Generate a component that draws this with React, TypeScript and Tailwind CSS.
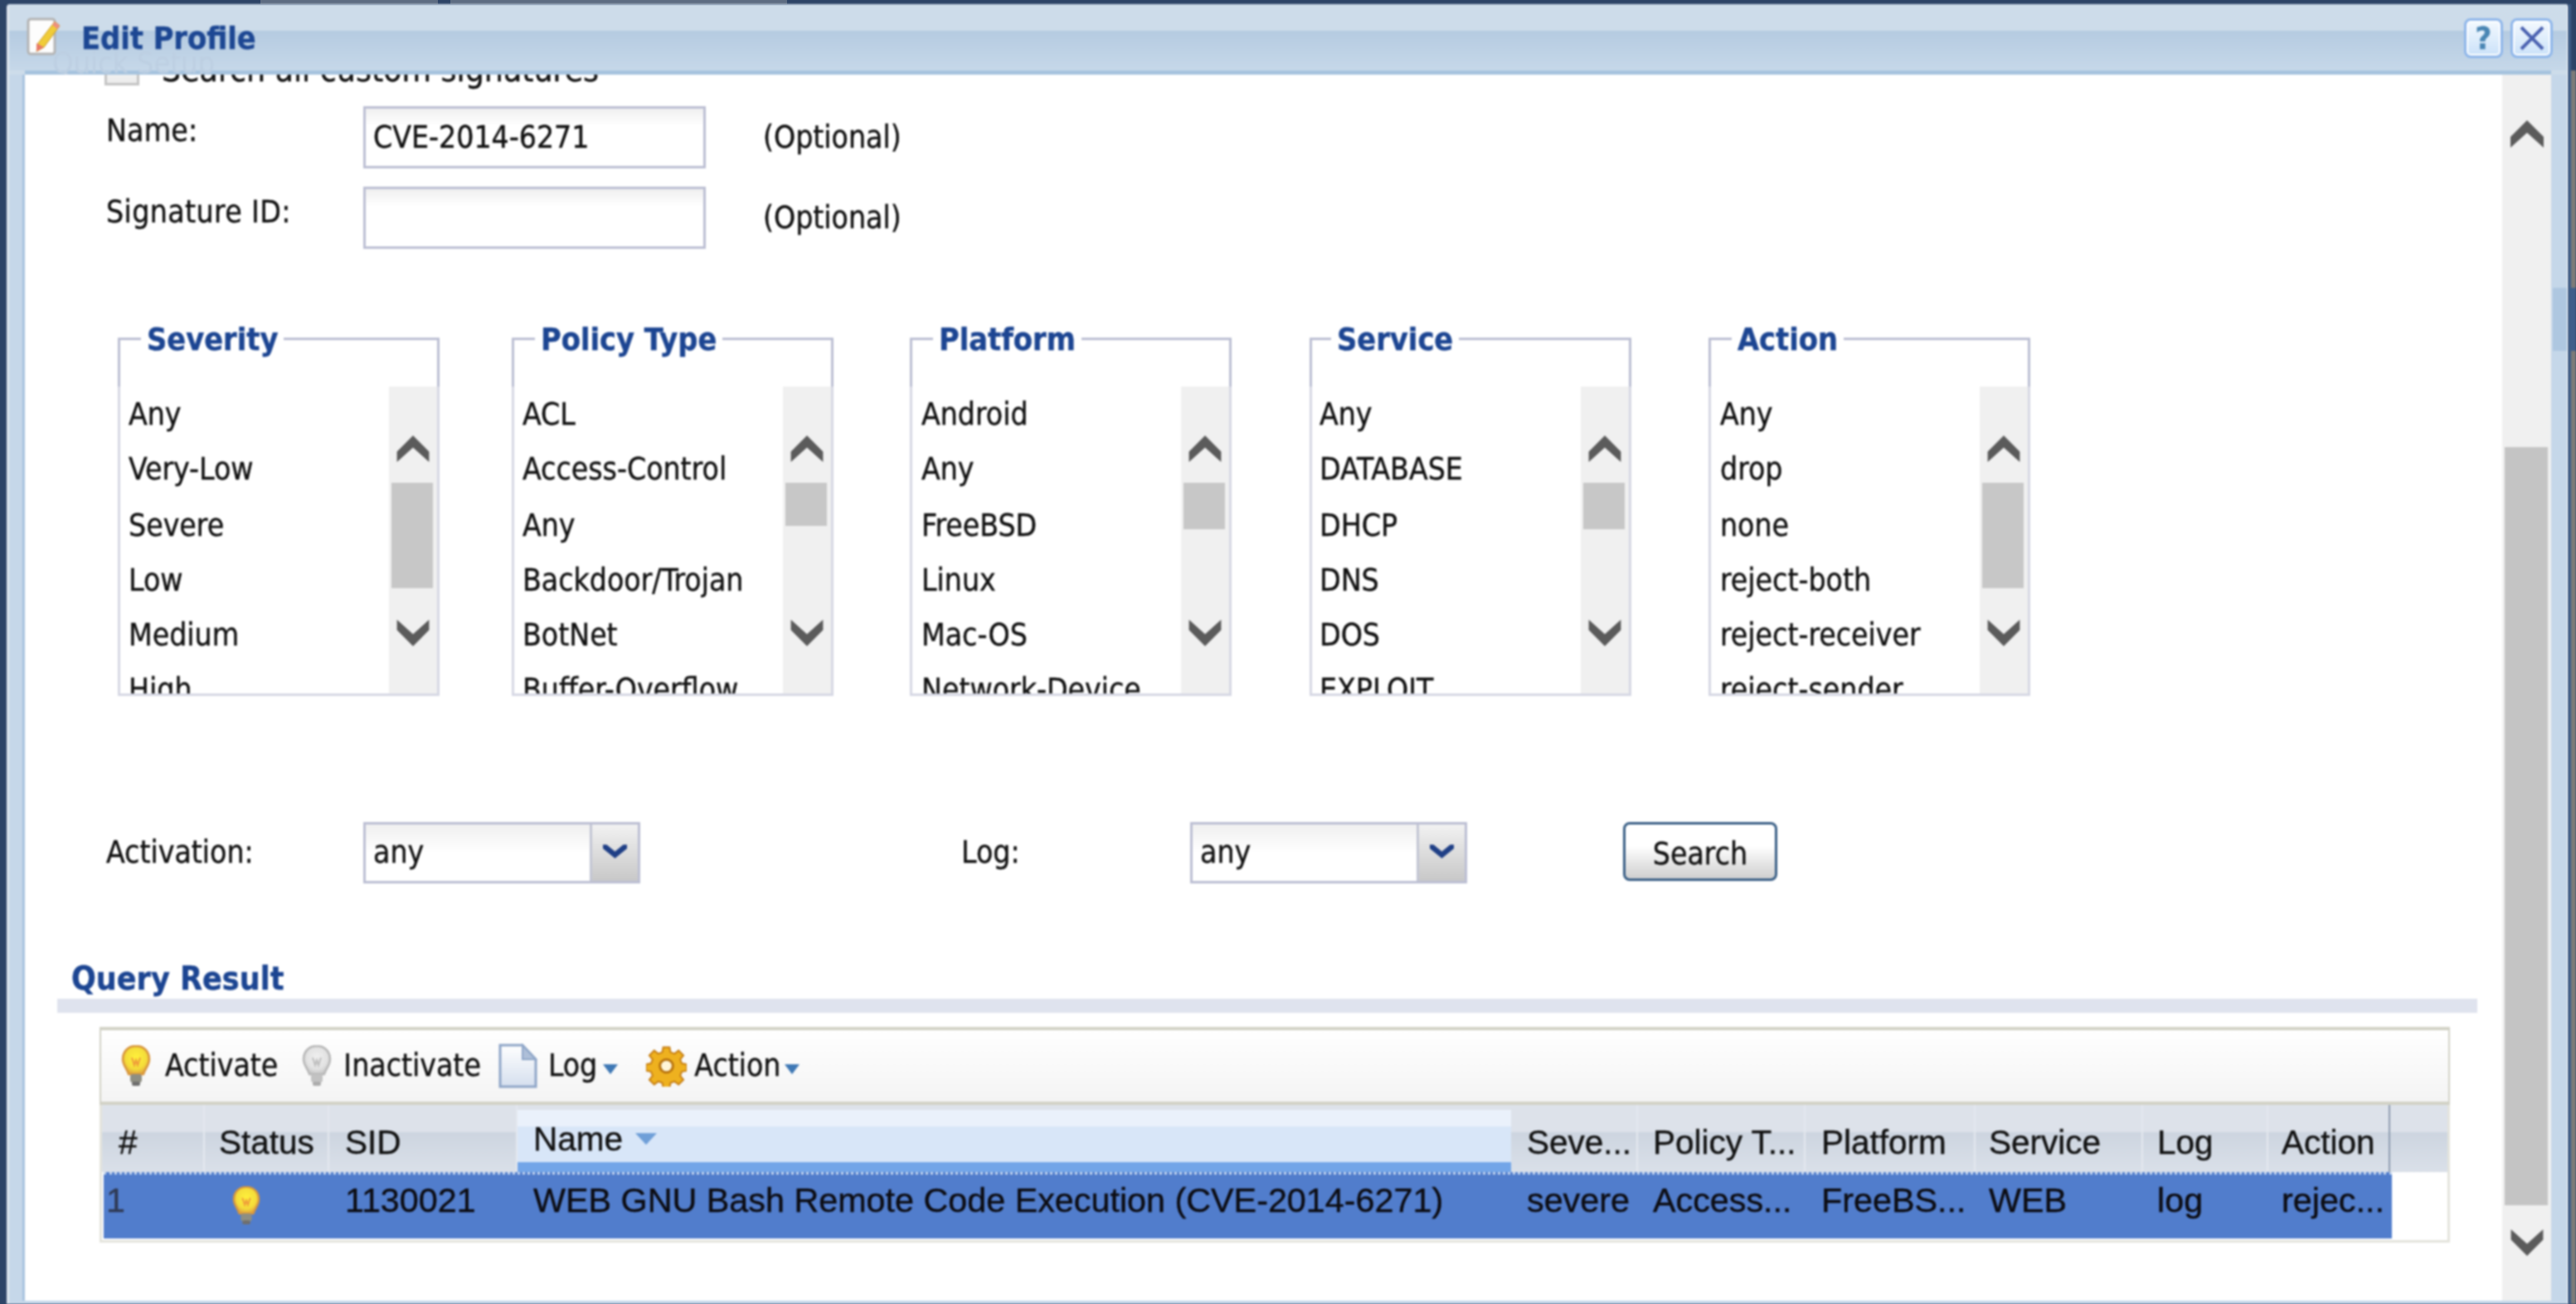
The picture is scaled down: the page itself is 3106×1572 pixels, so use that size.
import React from "react";

const Up = ({ cls }: { cls: string }) => (
  <svg viewBox="0 0 40 33" className={cls} fill="#5b5b5b"><polygon points="20,0 40,20 40,33 20,15 0,33 0,20" /></svg>
);
const Down = ({ cls }: { cls: string }) => (
  <svg viewBox="0 0 40 33" className={cls} fill="#5b5b5b"><polygon points="20,33 40,13 40,0 20,18 0,0 0,13" /></svg>
);

const Bulb = ({ on, cls, id }: { on: boolean; cls: string; id: string }) => (
  <svg viewBox="0 0 38 50" className={cls}>
    <defs>
      <radialGradient id={id} cx="0.5" cy="0.42" r="0.6">
        <stop offset="0" stopColor={on ? "#fff23a" : "#f0f0f0"} />
        <stop offset="0.65" stopColor={on ? "#f4dc3a" : "#e2e2e2"} />
        <stop offset="1" stopColor={on ? "#e0a040" : "#c4c4c4"} />
      </radialGradient>
    </defs>
    <path d="M19 1C9 1 3 8 3 17c0 7 5 11 7 18h18c2-7 7-11 7-18C35 8 29 1 19 1z" fill={`url(#${id})`} stroke={on ? "#d8963c" : "#b8b8b8"} strokeWidth="2.5" />
    <path d="M14 15l3 9 2-6 2 6 3-9" fill="none" stroke={on ? "#ee9a3a" : "#bdbdbd"} strokeWidth="2" />
    <rect x="12" y="35" width="14" height="10" rx="3" fill={on ? "#8e8e82" : "#c2c2c2"} />
    <rect x="14" y="44" width="10" height="5" rx="2" fill={on ? "#6e6e6e" : "#acacac"} />
  </svg>
);

const Gear = () => (
  <svg viewBox="0 0 50 50" className="w-[49px] h-[50px] shrink-0">
    <path d="M21 2h8l1 6 5 2 5-4 6 6-4 5 2 5 6 1v8l-6 1-2 5 4 5-6 6-5-4-5 2-1 6h-8l-1-6-5-2-5 4-6-6 4-5-2-5-6-1v-8l6-1 2-5-4-5 6-6 5 4 5-2z" fill="#eeb11f" stroke="#c77f14" strokeWidth="2" />
    <circle cx="25" cy="25" r="8" fill="#fff6d8" stroke="#b8740f" strokeWidth="3" />
  </svg>
);

const Doc = () => (
  <svg viewBox="0 0 47 54" className="w-[47px] h-[54px] shrink-0">
    <defs><linearGradient id="dg" x1="0" y1="0" x2="0" y2="1"><stop offset="0" stopColor="#ffffff" /><stop offset="1" stopColor="#d5dfee" /></linearGradient></defs>
    <path d="M2 2h27l16 17v33H2z" fill="url(#dg)" stroke="#8fa6c8" strokeWidth="3" />
    <path d="M29 2v17h16z" fill="#aebfd8" stroke="#8fa6c8" strokeWidth="2" />
  </svg>
);

const Caret = ({ cls }: { cls: string }) => (
  <svg viewBox="0 0 18 12" className={cls} fill="#3f78b5"><polygon points="0,0 18,0 9,12" /></svg>
);

const SelectChevron = () => (
  <svg viewBox="0 0 32 18" className="w-[29px] h-[17px]" fill="#1f3f86"><polygon points="16,18 32,5 32,0 27,0 16,9 5,0 0,0 0,5" /></svg>
);

const T = "font-['DejaVu_Sans_Condensed','DejaVu_Sans',sans-serif]";
const A = "font-['Liberation_Sans',Arial,sans-serif]";

const GroupBox = ({ title, items, thumb, ml, tpl, ipl }: { title: string; items: string[]; thumb: string; ml: string; tpl: string; ipl: string }) => (
  <div className={`w-[388px] h-[432px] flex flex-col border-b-[3px] border-[#d6d8e4] shrink-0 ${ml}`}>
    <div className="h-[59px] border-t-[3px] border-x-[3px] border-[#bcbfd3] relative shrink-0">
      <span className={`absolute -top-[23px] ${tpl} bg-white px-[7px] text-[#1c4592] text-[37.5px] leading-[44px] font-bold whitespace-nowrap`}>{title}</span>
    </div>
    <div className="flex flex-1 min-h-0 border-x-[3px] border-[#d6d8e4]">
      <div className={`flex-1 min-w-0 overflow-hidden ${ipl}`}>
        {items.map((s, i) => (
          <div key={s} className={`h-[66px] leading-[68px] text-[37px] whitespace-nowrap text-[#111] ${i === 2 ? "mt-[2px]" : ""}`}>{s}</div>
        ))}
      </div>
      <div className="w-[58px] bg-[#f0f0f0] flex flex-col items-center shrink-0">
        <Up cls="w-[40px] h-[32px] mt-[59px]" />
        <div className="h-[190px] pt-[25px] w-full pl-[3px] pr-[5px]">
          <div className={`bg-[#c7c7c7] w-full ${thumb}`} />
        </div>
        <Down cls="w-[40px] h-[32px]" />
      </div>
    </div>
  </div>
);

const Select = () => (
  <div className="w-[334px] h-[74px] border-[3px] border-[#bcbfd3] flex shrink-0 bg-gradient-to-b from-[#f0f0f0] via-white to-white">
    <div className="flex-1 pl-[9px] leading-[68px] text-[37px] text-[#111]">any</div>
    <div className="w-[58px] border-l-[3px] border-[#c3c6d4] bg-gradient-to-b from-[#f2f2f2] to-[#c8c8c8] flex justify-center pt-[24px]">
      <SelectChevron />
    </div>
  </div>
);

const cols = [
  { w: "w-[120px]", pl: "pl-[16px]", h: "#", v: "1" },
  { w: "w-[150px]", pl: "pl-[17px]", h: "Status", v: "" },
  { w: "w-[227px]", pl: "pl-[19px]", h: "SID", v: "1130021" },
  { w: "w-[1198px]", pl: "pl-[19px]", h: "Name", v: "WEB GNU Bash Remote Code Execution (CVE-2014-6271)" },
  { w: "w-[153px]", pl: "pl-[19px]", h: "Seve...", v: "severe" },
  { w: "w-[202px]", pl: "pl-[18px]", h: "Policy T...", v: "Access..." },
  { w: "w-[205px]", pl: "pl-[19px]", h: "Platform", v: "FreeBS..." },
  { w: "w-[202px]", pl: "pl-[16px]", h: "Service", v: "WEB" },
  { w: "w-[151px]", pl: "pl-[17px]", h: "Log", v: "log" },
  { w: "w-[147px]", pl: "pl-[16px]", h: "Action", v: "rejec..." },
];

export default function App() {
  return (
    <div className={`w-[3106px] h-[1572px] overflow-hidden bg-[#2d4467] flex flex-col ${T} [-webkit-text-stroke-width:0.4px]`}>
      <div className="h-[5px] shrink-0 flex">
        <div className="ml-[314px] w-[214px] bg-[#5e6d82]" />
        <div className="ml-[15px] w-[406px] bg-[#5e6d82]" />
      </div>
      <div className="flex flex-1 min-h-0 pl-[8px]">
        <div className="flex flex-col flex-1 min-w-0 min-h-0 bg-[#c5d7e9] relative blur-[0.8px] border-l-[3px] border-r-[2px] border-[#dfe6ef] rounded-t-[4px]">
          {/* title bar */}
          <div className="h-[85px] shrink-0 flex items-start relative bg-[#cddcea]">
            <div className="absolute inset-x-0 top-[32px] bottom-[5px] bg-gradient-to-b from-[#b5cbe1] to-[#c6d8e9]" />
            <div className="absolute left-[19px] right-[19px] bottom-0 h-[5px] bg-[#a6c3de]" />
            <span className="absolute left-[52px] top-[57px] text-[36px] leading-[28px] text-[#bdcfe2] overflow-hidden h-[28px] [-webkit-text-stroke-width:0px]">Quick Setup</span>
            <svg viewBox="0 0 42 48" className="w-[42px] h-[48px] ml-[21px] mt-[15px] shrink-0 relative">
              <rect x="2" y="3" width="32" height="42" rx="3" fill="#fdfdfd" stroke="#b4b4b4" strokeWidth="3" />
              <path d="M34 6l6 5-19 26-9 5 2-10z" fill="#f0cc38" stroke="#c99a2a" strokeWidth="1" />
              <path d="M34 6l6 5-3 4-6-5z" fill="#ee8f80" />
              <path d="M12 32l9 5-9 5z" fill="#e87a68" />
            </svg>
            <span className="ml-[24px] mt-[18px] text-[#1d4793] text-[37.5px] leading-[46px] font-bold relative">Edit Profile</span>
            <div className="ml-auto mt-[17px] mr-[17px] flex gap-[9px] relative">
              <div className="w-[47px] h-[48px] rounded-[8px] border-[3px] border-[#8eb6ea] bg-gradient-to-b from-[#f4f9fe] to-[#cbe2f9] shadow-[inset_0_0_0_2px_#ffffff] flex items-center justify-center text-[#4a86b4] text-[38px] leading-none font-bold">?</div>
              <div className="w-[51px] h-[48px] rounded-[8px] border-[3px] border-[#8eb6ea] bg-gradient-to-b from-[#f4f9fe] to-[#cbe2f9] shadow-[inset_0_0_0_2px_#ffffff] flex items-center justify-center">
                <svg viewBox="0 0 30 30" className="w-[30px] h-[30px]" stroke="#4a61b0" strokeWidth="4"><path d="M2 2l26 26M28 2L2 28" /></svg>
              </div>
            </div>
          </div>

          {/* body */}
          <div className="flex flex-1 min-h-0 pl-[19px] pr-[19px] pb-[4px]">
            <div className="flex-1 min-w-0 bg-white overflow-hidden text-[#111] border-l-[3px] border-[#a9c3df] -ml-[3px] pl-0">
              {/* clipped row */}
              <div className="h-[13px] flex items-end pl-[96px] relative">
                <div className="w-[42px] h-[34px] shrink-0 border-[3px] border-[#c4c4c4] bg-gradient-to-b from-[#fafafa] to-[#ececec]" />
                <span className="ml-[27px] text-[40.5px] leading-[44px] -mb-[3px] whitespace-nowrap">Search all custom signatures</span>
              </div>
              {/* Name */}
              <div className="flex pl-[98px] mt-[25px] h-[75px]">
                <div className="w-[310px] text-[37px] leading-[44px] pt-[8px] tracking-[0.2px]">Name:</div>
                <div className="w-[413px] border-[3px] border-[#bcbfd3] bg-gradient-to-b from-[#f0f0f0] to-white to-[30%] pl-[9px] text-[37px] leading-[69px]">CVE-2014-6271</div>
                <div className="ml-[69px] text-[37px] leading-[75px]">(Optional)</div>
              </div>
              <div className="flex pl-[98px] mt-[22px] h-[75px]">
                <div className="w-[310px] text-[37px] leading-[44px] pt-[9px] tracking-[0.4px]">Signature ID:</div>
                <div className="w-[413px] border-[3px] border-[#bcbfd3] bg-gradient-to-b from-[#f0f0f0] to-white to-[30%]" />
                <div className="ml-[69px] text-[37px] leading-[75px]">(Optional)</div>
              </div>
              {/* group boxes */}
              <div className="flex pl-[112px] mt-[107px]">
                <GroupBox title="Severity" ml="" tpl="left-[25px]" ipl="pl-[10px]" thumb="h-[127px]" items={["Any", "Very-Low", "Severe", "Low", "Medium", "High"]} />
                <GroupBox title="Policy Type" ml="ml-[87px]" tpl="left-[25px]" ipl="pl-[10px]" thumb="h-[52px]" items={["ACL", "Access-Control", "Any", "Backdoor/Trojan", "BotNet", "Buffer-Overflow"]} />
                <GroupBox title="Platform" ml="ml-[92px]" tpl="left-[25px]" ipl="pl-[11px]" thumb="h-[56px]" items={["Android", "Any", "FreeBSD", "Linux", "Mac-OS", "Network-Device"]} />
                <GroupBox title="Service" ml="ml-[94px]" tpl="left-[23px]" ipl="pl-[9px]" thumb="h-[56px]" items={["Any", "DATABASE", "DHCP", "DNS", "DOS", "EXPLOIT"]} />
                <GroupBox title="Action" ml="ml-[93px]" tpl="left-[25px]" ipl="pl-[11px]" thumb="h-[127px]" items={["Any", "drop", "none", "reject-both", "reject-receiver", "reject-sender"]} />
              </div>
              {/* filters */}
              <div className="flex items-center pl-[98px] mt-[152px] h-[74px] text-[37px]">
                <div className="w-[310px]">Activation:</div>
                <Select />
                <div className="ml-[387px] w-[276px]">Log:</div>
                <Select />
                <button className="ml-[188px] w-[186px] h-[71px] rounded-[8px] border-[3px] border-[#3a5f86] bg-gradient-to-b from-white from-[40%] to-[#cfcfcf] text-[37px] leading-[72px] text-[#111] -mt-[3px]">Search</button>
              </div>
              {/* query result */}
              <div className="mt-[95px] h-[44px] pl-[56px] text-[#1c4592] text-[39px] leading-[40px] font-bold">Query Result</div>
              <div className="ml-[39px] w-[2918px] h-[17px] bg-[#dfe3ee]" />
              {/* grid */}
              <div className="ml-[90px] w-[2834px] mt-[17px] h-[260px] flex flex-col border-x-[3px] border-b-[3px] border-[#e4e4dc]">
                <div className="h-[94px] -mx-[3px] border-y-[4px] border-x-[2px] border-[#d2d2c6] bg-gradient-to-b from-white to-[#f4f4f4] flex items-center text-[37px] shrink-0">
                  <Bulb id="b1" on cls="ml-[23px] w-[38px] h-[50px] shrink-0" />
                  <span className="ml-[16px]">Activate</span>
                  <Bulb id="b2" on={false} cls="ml-[28px] w-[38px] h-[50px] shrink-0" />
                  <span className="ml-[13px]">Inactivate</span>
                  <span className="ml-[21px]"><Doc /></span>
                  <span className="ml-[13px]">Log</span>
                  <Caret cls="ml-[7px] mt-[8px] w-[18px] h-[12px]" />
                  <span className="ml-[34px]"><Gear /></span>
                  <span className="ml-[9px]">Action</span>
                  <Caret cls="ml-[5px] mt-[8px] w-[18px] h-[12px]" />
                </div>
                <div className={`h-[81px] shrink-0 flex pl-[4px] bg-gradient-to-b from-[#dde2ea] from-[40%] via-[#cdd5e0] via-[41%] to-[#dae0e9] ${A} text-[40.5px] text-[#111]`}>
                  {cols.map((c, i) =>
                    c.h === "Name" ? (
                      <div key={c.h} className={`${c.w} ${c.pl} shrink-0 mt-[6px] flex gap-[15px] bg-gradient-to-b from-[#eaf1fb] from-[32%] to-[#d8e6f8] to-[32%] border-b-[12px] border-[#72a5e8] leading-[70px]`}>
                        {c.h}
                        <svg viewBox="0 0 26 14" className="w-[26px] h-[14px] mt-[28px]" fill="#6f9fd8"><polygon points="0,0 26,0 13,14" /></svg>
                      </div>
                    ) : (
                      <div key={c.h} className={`${c.w} ${c.pl} shrink-0 leading-[90px] whitespace-nowrap border-r-[2px] ${i === 9 ? "border-[#8e9cb0]" : "border-[#e4e8ef]"}`}>{c.h}</div>
                    )
                  )}
                </div>
                <div className="flex-1 min-h-0">
                  <div className={`ml-[2px] w-[2759px] h-[80px] border-t-[3px] border-dotted border-[#c5d6ee] flex bg-[#517dcc] ${A} text-[41.3px] text-[#0c0c12] leading-[62px]`}>
                    {cols.map((c, i) => (
                      <div key={c.h} className={`${c.w} shrink-0 whitespace-nowrap ${i === 0 ? "pl-[3px] text-[#2f3a55] mr-[2px]" : c.pl}`}>
                        {c.h === "Status" ? <Bulb id="b3" on cls="w-[38px] h-[47px] ml-[14px] mt-[14px]" /> : c.v}
                      </div>
                    ))}
                  </div>
                </div>
              </div>
            </div>
            {/* scrollbar */}
            <div className="w-[59px] bg-[#f0f0f0] shrink-0 flex flex-col items-center">
              <Up cls="w-[40px] h-[33px] mt-[55px] shrink-0" />
              <div className="w-full pl-[3px] pr-[4px] pt-[361px] shrink-0">
                <div className="h-[914px] bg-[#c4c4c4]" />
              </div>
              <Down cls="w-[40px] h-[32px] mt-[29px] shrink-0" />
            </div>
          </div>
          <div className="absolute right-0 top-[342px] w-[17px] h-[76px] bg-[#aec7e0]" />
        </div>
        {/* desktop peeking out at the right */}
        <div className="w-[9px] shrink-0 flex flex-col border-l-[3px] border-[#3f5f8a] blur-[0.8px]">
          <div className="h-[80px] bg-[#2d4467]" />
          <div className="h-[262px] bg-[#7d7b78]" />
          <div className="h-[76px] bg-[#3f5f8a]" />
          <div className="flex-1 bg-[#7d7b78]" />
        </div>
      </div>
    </div>
  );
}
